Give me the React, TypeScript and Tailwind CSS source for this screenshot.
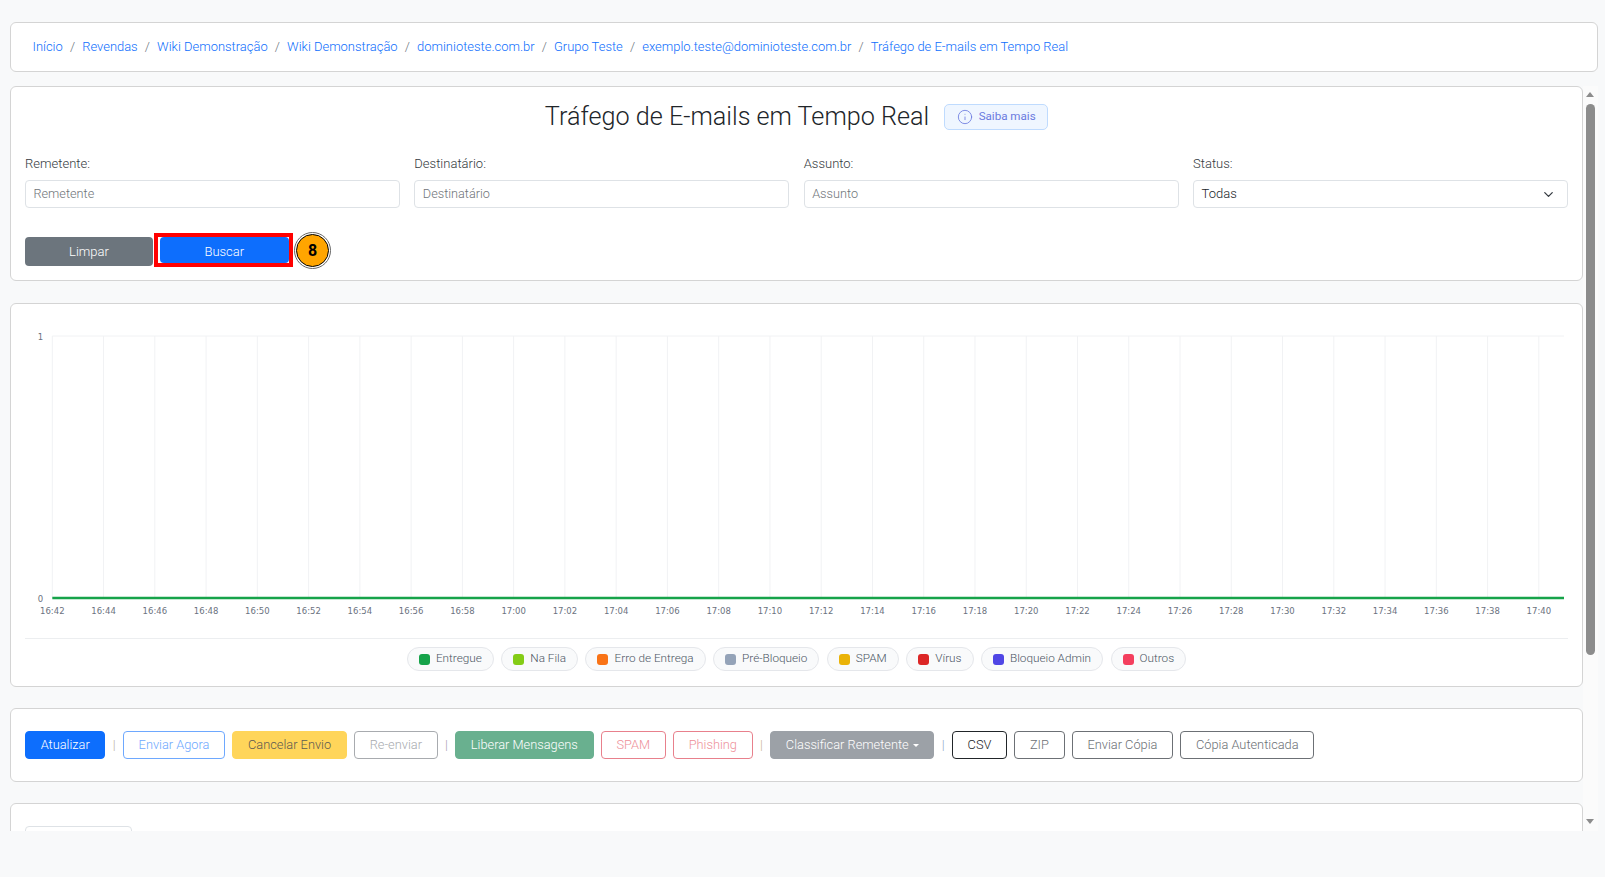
import React from 'react';
import { ChevronDown, Info } from 'lucide-react';

const crumbs = [
  'Início',
  'Revendas',
  'Wiki Demonstração',
  'Wiki Demonstração',
  'dominioteste.com.br',
  'Grupo Teste',
  'exemplo.teste@dominioteste.com.br',
  'Tráfego de E-mails em Tempo Real',
];

const legend = [
  { label: 'Entregue', color: 'bg-[#16a34a]' },
  { label: 'Na Fila', color: 'bg-[#84cc16]' },
  { label: 'Erro de Entrega', color: 'bg-[#f97316]' },
  { label: 'Pré-Bloqueio', color: 'bg-[#94a3b8]' },
  { label: 'SPAM', color: 'bg-[#eab308]' },
  { label: 'Vírus', color: 'bg-[#dc2626]' },
  { label: 'Bloqueio Admin', color: 'bg-[#4f46e5]' },
  { label: 'Outros', color: 'bg-[#f43f5e]' },
];

const ticks = Array.from({ length: 30 }).map((_, i) => {
  const total = 16 * 60 + 42 + i * 2;
  const h = Math.floor(total / 60);
  const m = total % 60;
  return `${h}:${m < 10 ? '0' + m : m}`;
});

const Field = ({ label, placeholder }: { label: string; placeholder: string }) => (
  <div className="flex flex-col">
    <label className="text-[13px] font-light leading-[17px] text-[#343a40] mb-[8px]">{label}</label>
    <input
      placeholder={placeholder}
      className="h-[28px] w-full rounded-[4px] border border-[#dee2e6] bg-white px-[7.5px] pb-[1px] text-[12.7px] font-light outline-none placeholder:text-[#70757a]"
    />
  </div>
);

const Sep = ({ color }: { color: string }) => (
  <span className={`mx-[7.3px] text-[13px] font-light ${color}`}>|</span>
);

const Btn = ({ className, children }: { className: string; children: React.ReactNode }) => (
  <button className={`h-[28px] whitespace-nowrap rounded-[4px] border px-[14.7px] text-[12.8px] font-light leading-none ${className}`}>
    {children}
  </button>
);

const Chart = () => {
  const x0 = 27.3;
  const step = 51.26;
  const top = 32;
  const bottom = 294;
  const font = 'DejaVu Sans, sans-serif';
  return (
    <svg width="1543" height="334" className="block">
      <line x1={x0} x2={1539} y1={top} y2={top} stroke="#f1f2f4" />
      {ticks.map((t, i) => (
        <g key={t}>
          <line x1={x0 + i * step} x2={x0 + i * step} y1={top} y2={bottom} stroke="#f1f2f4" />
          <text x={x0 + i * step} y={bottom + 16} textAnchor="middle" fontSize="8.5" fontFamily={font} fill="#6b7280">
            {t}
          </text>
        </g>
      ))}
      <line x1={x0} x2={1539} y1={bottom} y2={bottom} stroke="#16a34a" strokeWidth="2.4" />
      <text x={15.5} y={top + 3.5} textAnchor="middle" fontSize="8.5" fontFamily={font} fill="#6b7280">1</text>
      <text x={15.5} y={bottom + 3.5} textAnchor="middle" fontSize="8.5" fontFamily={font} fill="#6b7280">0</text>
    </svg>
  );
};

const App: React.FC = () => {
  return (
    <div className="h-[877px] w-[1605px] overflow-hidden bg-[#f8f9fa] font-['Roboto',sans-serif] pt-[22px] pl-[10px] pr-[7px]">
      {/* Breadcrumb */}
      <nav className="flex h-[50px] items-center rounded-[6px] border border-[#d4d4d4] bg-white pl-[21.5px] text-[12.95px] font-light text-[#0d6efd]">
        {crumbs.map((c, i) => (
          <React.Fragment key={i}>
            {i > 0 && <span className="mx-[7.15px] text-[#6c757d]">/</span>}
            <a className="whitespace-nowrap">{c}</a>
          </React.Fragment>
        ))}
      </nav>

      <div className="mt-[14px] flex h-[745px] overflow-hidden">
        <div className="w-[1573px] shrink-0">
          {/* Filters */}
          <section className="h-[195px] rounded-[6px] border border-[#d4d4d4] bg-white px-[14px] pt-[13px]">
            <div className="flex h-[32px] items-center justify-center gap-[15px]">
              <h1 className="mt-[1px] text-[25.2px] font-light leading-none text-[#212529]">Tráfego de E-mails em Tempo Real</h1>
              <span className="mt-[1px] flex h-[26px] w-[104px] items-center justify-center gap-[6px] rounded-[5px] border border-[#bfdbfe] bg-[#eff6ff] text-[11.6px] text-[#6a7ae0]">
                <Info size={16} strokeWidth={1.25} />
                Saiba mais
              </span>
            </div>
            <div className="mt-[23px] grid grid-cols-4 gap-x-[14.4px]">
              <Field label="Remetente:" placeholder="Remetente" />
              <Field label="Destinatário:" placeholder="Destinatário" />
              <Field label="Assunto:" placeholder="Assunto" />
              <div className="flex flex-col">
                <label className="text-[13px] font-light leading-[17px] text-[#343a40] mb-[8px]">Status:</label>
                <div className="flex h-[28px] items-center justify-between rounded-[4px] border border-[#dee2e6] bg-white pl-[7.5px] pr-[11px] text-[13px] font-light text-[#212529]">
                  Todas
                  <ChevronDown size={15} strokeWidth={2} className="text-[#343a40]" />
                </div>
              </div>
            </div>
            <div className="mt-[25px] flex items-start">
              <button className="mt-[4px] h-[29px] w-[128px] rounded-[4px] bg-[#6c757d] text-[13px] font-light text-white">
                Limpar
              </button>
              <div className="ml-[1px] h-[34px] w-[139px] overflow-hidden border-4 border-[#ff0000] bg-white pl-[2px] pr-[0.4px]">
                <button className="h-[26px] w-full rounded-[4px] bg-[#0d6efd] pt-[3px] text-[13px] font-light text-white">
                  Buscar
                </button>
              </div>
              <div className="-mt-[1px] ml-[1px] flex h-[37px] w-[37px] shrink-0 items-center justify-center rounded-full border border-[#666] bg-white p-[1px]">
                <div className="flex h-full w-full items-center justify-center rounded-full border border-black bg-[#ffa500] text-[16px] font-bold text-black">
                  8
                </div>
              </div>
            </div>
          </section>

          {/* Chart */}
          <section className="mt-[22px] h-[384px] rounded-[6px] border border-[#d4d4d4] bg-white px-[14px]">
            <Chart />
            <div className="flex h-[49px] items-start justify-center gap-[7.5px] border-t border-[#eceef0] pt-[8px]">
              {legend.map((l) => (
                <span
                  key={l.label}
                  className="flex h-[24px] items-center gap-[6px] rounded-full border border-[#e5e7eb] bg-[#f9fafb] px-[11px] text-[11.75px] font-light text-[#4b5563]"
                >
                  <i className={`h-[11px] w-[11px] rounded-[3px] ${l.color}`} />
                  {l.label}
                </span>
              ))}
            </div>
          </section>

          {/* Actions */}
          <section className="mt-[21px] flex h-[74px] items-center rounded-[6px] border border-[#d4d4d4] bg-white px-[14px]">
            <Btn className="border-[#0d6efd] bg-[#0d6efd] text-white">Atualizar</Btn>
            <Sep color="text-[#b9b09f]" />
            <div className="flex items-center gap-[7.2px]">
              <Btn className="border-[#6ea8fe] text-[#6ea8fe]">Enviar Agora</Btn>
              <Btn className="border-[#ffd55a] bg-[#ffd55a] text-[#5c5a52]">Cancelar Envio</Btn>
              <Btn className="border-[#a8abaf] text-[#a8abaf]">Re-enviar</Btn>
            </div>
            <Sep color="text-[#a99bb0]" />
            <div className="flex items-center gap-[7.2px]">
              <Btn className="border-[#69b08f] bg-[#69b08f] text-white">Liberar Mensagens</Btn>
              <Btn className="border-[#e8808c] text-[#ee8f99]">SPAM</Btn>
              <Btn className="border-[#e8808c] text-[#ee8f99]">Phishing</Btn>
            </div>
            <Sep color="text-[#c9b48f]" />
            <Btn className="border-[#9ca1a7] bg-[#9ca1a7] text-white">
              Classificar Remetente
              <span className="ml-[4px] inline-block border-x-[3px] border-t-[3px] border-x-transparent border-t-white align-[2px]" />
            </Btn>
            <Sep color="text-[#8fa8c4]" />
            <div className="flex items-center gap-[7.2px]">
              <Btn className="border-[#212529] text-[#212529]">CSV</Btn>
              <Btn className="border-[#6c7075] text-[#6c7075]">ZIP</Btn>
              <Btn className="border-[#6c7075] text-[#6c7075]">Enviar Cópia</Btn>
              <Btn className="border-[#6c7075] text-[#6c7075]">Cópia Autenticada</Btn>
            </div>
          </section>

          {/* Next card, cut off by the scroll area */}
          <section className="mt-[21px] h-[120px] rounded-[6px] border border-[#d4d4d4] bg-white px-[14px] pt-[22px]">
            <div className="h-[40px] w-[107px] rounded-[4px] border border-[#dee2e6]" />
          </section>
        </div>

        {/* Scrollbar */}
        <div className="relative w-[15px] shrink-0 bg-[#fbfbfb]">
          <span className="absolute left-[3px] top-[6px] h-0 w-0 border-x-[4.5px] border-b-[5px] border-x-transparent border-b-[#8c8c8c]" />
          <div className="absolute left-[3px] top-[18px] h-[551px] w-[9px] rounded-full bg-[#8c8c8c]" />
          <span className="absolute bottom-[7px] left-[3px] h-0 w-0 border-x-[4.5px] border-t-[5px] border-x-transparent border-t-[#8c8c8c]" />
        </div>
      </div>
    </div>
  );
};

export default App;
